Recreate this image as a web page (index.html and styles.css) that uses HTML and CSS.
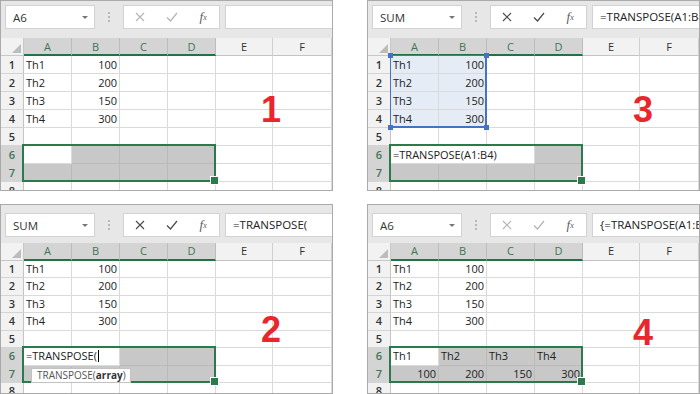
FILE: index.html
```html
<!DOCTYPE html>
<html lang="en">
<head>
    <meta charset="UTF-8">
    <meta name="viewport" content="width=device-width, initial-scale=1.0">
    <title>TRANSPOSE</title>
    <link rel="stylesheet" href="styles.css">
</head>
<body>
<main class="board">

    <!-- 1: select the target range -->
    <section class="panel">
        <div class="bar">
            <div class="namebox"><span>A6</span><span class="caret"></span></div>
            <div class="grip"></div>
            <div class="fnbox off">
                <span><svg width="10" height="10" viewBox="0 0 10 10"><path d="M1 1L9 9M9 1L1 9" stroke="currentColor" stroke-width="1.1"/></svg></span>
                <span><svg width="12" height="10" viewBox="0 0 12 10"><path d="M1 5.5L4.5 9L11 1" fill="none" stroke="currentColor" stroke-width="1.2"/></svg></span>
                <span class="fx"><i>f</i><sub>x</sub></span>
            </div>
            <div class="formula"></div>
        </div>
        <div class="sheet">
            <div class="corner"></div><div class="ch on">A</div><div class="ch on">B</div><div class="ch on">C</div><div class="ch on">D</div><div class="ch">E</div><div class="ch">F</div>
            <div class="rh">1</div><div>Th1</div><div class="n">100</div><div></div><div></div><div></div><div></div>
            <div class="rh">2</div><div>Th2</div><div class="n">200</div><div></div><div></div><div></div><div></div>
            <div class="rh">3</div><div>Th3</div><div class="n">150</div><div></div><div></div><div></div><div></div>
            <div class="rh">4</div><div>Th4</div><div class="n">300</div><div></div><div></div><div></div><div></div>
            <div class="rh">5</div><div></div><div></div><div></div><div></div><div></div><div></div>
            <div class="rh on">6</div><div></div><div class="g"></div><div class="g"></div><div class="g"></div><div></div><div></div>
            <div class="rh on">7</div><div class="g"></div><div class="g"></div><div class="g"></div><div class="g"></div><div></div><div></div>
            <div class="rh">8</div><div></div><div></div><div></div><div></div><div></div><div></div>
            <span class="sel"></span>
        </div>
        <span class="mark">1</span>
    </section>

    <!-- 3: pick the source range -->
    <section class="panel">
        <div class="bar">
            <div class="namebox"><span>SUM</span><span class="caret"></span></div>
            <div class="grip"></div>
            <div class="fnbox">
                <span><svg width="10" height="10" viewBox="0 0 10 10"><path d="M1 1L9 9M9 1L1 9" stroke="currentColor" stroke-width="1.1"/></svg></span>
                <span><svg width="12" height="10" viewBox="0 0 12 10"><path d="M1 5.5L4.5 9L11 1" fill="none" stroke="currentColor" stroke-width="1.2"/></svg></span>
                <span class="fx"><i>f</i><sub>x</sub></span>
            </div>
            <div class="formula">=TRANSPOSE(A1:B4)</div>
        </div>
        <div class="sheet">
            <div class="corner"></div><div class="ch on">A</div><div class="ch on">B</div><div class="ch on">C</div><div class="ch on">D</div><div class="ch">E</div><div class="ch">F</div>
            <div class="rh">1</div><div class="b">Th1</div><div class="b n">100</div><div></div><div></div><div></div><div></div>
            <div class="rh">2</div><div class="b">Th2</div><div class="b n">200</div><div></div><div></div><div></div><div></div>
            <div class="rh">3</div><div class="b">Th3</div><div class="b n">150</div><div></div><div></div><div></div><div></div>
            <div class="rh">4</div><div class="b">Th4</div><div class="b n">300</div><div></div><div></div><div></div><div></div>
            <div class="rh">5</div><div></div><div></div><div></div><div></div><div></div><div></div>
            <div class="rh on">6</div><div class="edit">=TRANSPOSE(A1:B4)</div><div class="x"></div><div></div><div class="g"></div><div></div><div></div>
            <div class="rh on">7</div><div class="g"></div><div class="g"></div><div class="g"></div><div class="g"></div><div></div><div></div>
            <div class="rh">8</div><div></div><div></div><div></div><div></div><div></div><div></div>
            <span class="ref"><i class="k tl"></i><i class="k tr"></i><i class="k bl"></i><i class="k br"></i></span>
            <span class="sel"></span>
        </div>
        <span class="mark right">3</span>
    </section>

    <!-- 2: start typing the formula -->
    <section class="panel low">
        <div class="bar">
            <div class="namebox"><span>SUM</span><span class="caret"></span></div>
            <div class="grip"></div>
            <div class="fnbox">
                <span><svg width="10" height="10" viewBox="0 0 10 10"><path d="M1 1L9 9M9 1L1 9" stroke="currentColor" stroke-width="1.1"/></svg></span>
                <span><svg width="12" height="10" viewBox="0 0 12 10"><path d="M1 5.5L4.5 9L11 1" fill="none" stroke="currentColor" stroke-width="1.2"/></svg></span>
                <span class="fx"><i>f</i><sub>x</sub></span>
            </div>
            <div class="formula">=TRANSPOSE(</div>
        </div>
        <div class="sheet">
            <div class="corner"></div><div class="ch on">A</div><div class="ch on">B</div><div class="ch on">C</div><div class="ch on">D</div><div class="ch">E</div><div class="ch">F</div>
            <div class="rh">1</div><div>Th1</div><div class="n">100</div><div></div><div></div><div></div><div></div>
            <div class="rh">2</div><div>Th2</div><div class="n">200</div><div></div><div></div><div></div><div></div>
            <div class="rh">3</div><div>Th3</div><div class="n">150</div><div></div><div></div><div></div><div></div>
            <div class="rh">4</div><div>Th4</div><div class="n">300</div><div></div><div></div><div></div><div></div>
            <div class="rh">5</div><div></div><div></div><div></div><div></div><div></div><div></div>
            <div class="rh on">6</div><div class="edit">=TRANSPOSE(<b class="cursor"></b></div><div></div><div class="g"></div><div class="g"></div><div></div><div></div>
            <div class="rh on">7</div><div class="g"></div><div class="g"></div><div class="g"></div><div class="g"></div><div></div><div></div>
            <div class="rh">8</div><div></div><div></div><div></div><div></div><div></div><div></div>
            <span class="sel"></span>
            <span class="tip">TRANSPOSE(<b>array</b>)</span>
        </div>
        <span class="mark">2</span>
    </section>

    <!-- 4: Ctrl+Shift+Enter -->
    <section class="panel low">
        <div class="bar">
            <div class="namebox"><span>A6</span><span class="caret"></span></div>
            <div class="grip"></div>
            <div class="fnbox off">
                <span><svg width="10" height="10" viewBox="0 0 10 10"><path d="M1 1L9 9M9 1L1 9" stroke="currentColor" stroke-width="1.1"/></svg></span>
                <span><svg width="12" height="10" viewBox="0 0 12 10"><path d="M1 5.5L4.5 9L11 1" fill="none" stroke="currentColor" stroke-width="1.2"/></svg></span>
                <span class="fx"><i>f</i><sub>x</sub></span>
            </div>
            <div class="formula">{=TRANSPOSE(A1:B4)}</div>
        </div>
        <div class="sheet">
            <div class="corner"></div><div class="ch on">A</div><div class="ch on">B</div><div class="ch on">C</div><div class="ch on">D</div><div class="ch">E</div><div class="ch">F</div>
            <div class="rh">1</div><div>Th1</div><div class="n">100</div><div></div><div></div><div></div><div></div>
            <div class="rh">2</div><div>Th2</div><div class="n">200</div><div></div><div></div><div></div><div></div>
            <div class="rh">3</div><div>Th3</div><div class="n">150</div><div></div><div></div><div></div><div></div>
            <div class="rh">4</div><div>Th4</div><div class="n">300</div><div></div><div></div><div></div><div></div>
            <div class="rh">5</div><div></div><div></div><div></div><div></div><div></div><div></div>
            <div class="rh on">6</div><div>Th1</div><div class="g">Th2</div><div class="g">Th3</div><div class="g">Th4</div><div></div><div></div>
            <div class="rh on">7</div><div class="g n">100</div><div class="g n">200</div><div class="g n">150</div><div class="g n">300</div><div></div><div></div>
            <div class="rh">8</div><div></div><div></div><div></div><div></div><div></div><div></div>
            <span class="sel"></span>
        </div>
        <span class="mark right low-mark">4</span>
    </section>

</main>
</body>
</html>
```

FILE: styles.css
```css
* {
    box-sizing: border-box;
}

body {
    margin: 0;
    background-color: #ffffff;
    font-family: "Open Sans", "Noto Sans", sans-serif;
    color: #222222;
}

.board {
    display: grid;
    grid-template-columns: 333px 333px;
    grid-template-rows: 191px 190px;
    column-gap: 34px;
    row-gap: 13px;
    width: 700px;
    height: 394px;
    overflow: hidden;
}

.panel {
    position: relative;
    overflow: hidden;
    background-color: #e7e7e7;
    border: 1px solid #aaaaaa;
    --rh: 18px;
}
.panel.low {
    --rh: 17.5px;
}

/* formula bar */
.bar {
    display: flex;
    align-items: flex-start;
    height: 37px;
    padding: 4px 0 0 4px;
}
.low .bar {
    height: 38px;
    padding-top: 8px;
}

.namebox {
    display: flex;
    align-items: center;
    justify-content: space-between;
    width: 90px;
    height: 24px;
    padding: 0 6px 0 7px;
    background-color: #ffffff;
    border: 1px solid #d2d2d2;
    font-size: 11.5px;
    color: #333333;
}
.caret {
    width: 0;
    height: 0;
    border-left: 3px solid transparent;
    border-right: 3px solid transparent;
    border-top: 3px solid #777777;
}

.grip {
    display: flex;
    align-items: center;
    justify-content: center;
    width: 28px;
    height: 24px;
}
.grip::before {
    content: '';
    width: 2px;
    height: 2px;
    margin-top: -8px;
    background-color: #b8b8b8;
    box-shadow: 0 4px #b8b8b8, 0 8px #b8b8b8;
}

.fnbox {
    display: flex;
    align-items: center;
    width: 97px;
    height: 24px;
    background-color: #ffffff;
    border: 1px solid #d2d2d2;
    color: #4a4a4a;
}
.fnbox.off {
    color: #b4b4b4;
}
.fnbox > span {
    display: flex;
    align-items: center;
    justify-content: center;
    width: 32px;
}
.fx {
    font-family: "Liberation Serif", serif;
    font-size: 13px;
    color: #5a5a5a;
}
.fx sub {
    font-size: 8px;
    font-style: italic;
    vertical-align: -1px;
}

.formula {
    flex: 1;
    height: 24px;
    margin-left: 5px;
    padding-left: 7px;
    background-color: #ffffff;
    border: 1px solid #d2d2d2;
    border-right: none;
    font-size: 11.5px;
    line-height: 22px;
    white-space: nowrap;
    overflow: hidden;
}

/* worksheet */
.sheet {
    position: relative;
    display: grid;
    grid-template-columns: 23px 48px 48px 48px 48px 57px 1fr;
    grid-auto-rows: var(--rh);
    background-color: #ffffff;
    font-size: 11px;
}
.sheet > div {
    padding: 0 2px;
    border-right: 1px solid #dadada;
    border-bottom: 1px solid #dadada;
    line-height: calc(var(--rh) - 1px);
    white-space: nowrap;
}

.corner {
    display: flex;
    align-items: flex-end;
    justify-content: flex-end;
    background-color: #f2f2f2;
}
.sheet > .corner {
    padding: 2px;
    border-color: #c8c8c8;
}
.corner::after {
    content: '';
    border-left: 9px solid transparent;
    border-bottom: 9px solid #bcbcbc;
}

.sheet > .ch {
    text-align: center;
    background-color: #f2f2f2;
    border-right-color: #cfcfcf;
    border-bottom-color: #c4c4c4;
    color: #333333;
}
.sheet > .ch.on {
    background-color: #d4d4d4;
    border-right-color: #bdbdbd;
    border-bottom: 2px solid #217346;
    color: #3f7555;
}

.sheet > .rh {
    text-align: center;
    background-color: #f2f2f2;
    border-right-color: #c4c4c4;
    border-bottom-color: #d4d4d4;
    font-weight: 600;
    color: #333333;
}
.sheet > .rh.on {
    background-color: #d4d4d4;
    color: #3f7555;
}

.sheet > .n {
    text-align: right;
}
.sheet > .g {
    background-color: #c8c8c8;
    border-color: #bababa;
}
.sheet > .b {
    background-color: #e6ecf6;
}
.sheet > .edit {
    position: relative;
    z-index: 1;
    border-right-color: #ffffff;
}
.sheet > .x {
    border-right-color: #ffffff;
}

.cursor {
    display: inline-block;
    width: 1px;
    height: 12px;
    margin-left: 1px;
    vertical-align: -2px;
    background-color: #000000;
}

/* overlays */
.sel {
    position: absolute;
    grid-area: 7 / 2 / 9 / 6;
    top: -2px;
    left: -2px;
    right: 0;
    bottom: 0;
    z-index: 2;
    border: 2px solid #2a7a4b;
}
.sel::after {
    content: '';
    position: absolute;
    right: -5px;
    bottom: -5px;
    width: 7px;
    height: 7px;
    background-color: #2a7a4b;
    border: 1px solid #ffffff;
}

.ref {
    position: absolute;
    grid-area: 2 / 2 / 6 / 4;
    top: -1px;
    left: -1px;
    right: 0;
    bottom: 0;
    z-index: 2;
    border: 1px solid #4472c4;
    border-right-width: 2px;
    border-bottom-width: 2px;
}
.k {
    position: absolute;
    width: 5px;
    height: 5px;
    background-color: #4472c4;
}
.tl { top: -3px; left: -3px; }
.tr { top: -3px; right: -4px; }
.bl { bottom: -4px; left: -3px; }
.br { bottom: -4px; right: -4px; }

.tip {
    position: absolute;
    grid-area: 8 / 2 / 9 / 5;
    top: 2px;
    left: 7px;
    z-index: 3;
    width: 100px;
    height: 15px;
    padding: 0 5px;
    background-color: #ffffff;
    border: 1px solid #c2c2c2;
    font-size: 10px;
    line-height: 13px;
    color: #555555;
    white-space: nowrap;
}
.tip b {
    color: #333333;
}

.mark {
    position: absolute;
    top: 91px;
    left: 250px;
    z-index: 4;
    width: 40px;
    text-align: center;
    font-family: "Liberation Sans", Arial, sans-serif;
    font-weight: bold;
    font-size: 36px;
    line-height: 36px;
    color: #e8262c;
}
.mark.right {
    left: 255px;
}
.low .mark {
    top: 107px;
}
.low .mark.low-mark {
    top: 110px;
}
```
